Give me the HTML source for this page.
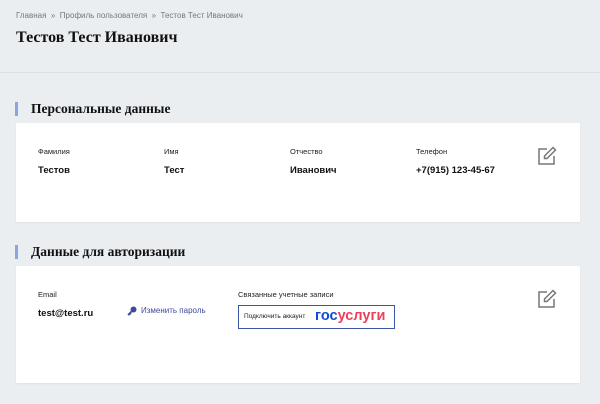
<!DOCTYPE html>
<html><head><meta charset="utf-8"><style>
*{margin:0;padding:0;box-sizing:border-box}
body{width:600px;height:404px;background:#ebeef1;font-family:"Liberation Sans","DejaVu Sans",sans-serif;color:#111;position:relative;overflow:hidden}
.a{position:absolute;white-space:nowrap}
.hdr{position:absolute;left:0;top:0;width:600px;height:73px;border-bottom:1px solid #dcdfe3}
.bc{font-size:8px;color:#777;left:16px;top:11px}
.h1{font-family:"Liberation Serif","DejaVu Serif",serif;font-weight:bold;font-size:16px;left:16px;top:29px;color:#111}
.sec{font-family:"Liberation Serif","DejaVu Serif",serif;font-weight:bold;font-size:13.5px;left:31px;color:#111}
.bar{position:absolute;left:15px;width:3px;height:14px;background:#8ea3e3}
.card{position:absolute;left:16px;width:564px;background:#fff;box-shadow:0 1px 2px rgba(0,0,0,.06)}
.lb{font-size:7.5px;color:#222}
.v{font-size:9.5px;font-weight:bold;color:#111}
</style></head><body>
<div class="hdr"></div>
<div class="a bc">Главная &nbsp;»&nbsp; Профиль пользователя &nbsp;»&nbsp; Тестов Тест Иванович</div>
<div class="a h1">Тестов Тест Иванович</div>

<div class="bar" style="top:102px"></div>
<div class="a sec" style="top:101px">Персональные данные</div>
<div class="card" style="top:123px;height:99px"></div>
<div class="a lb" style="left:38px;top:147px">Фамилия</div>
<div class="a lb" style="left:164px;top:147px">Имя</div>
<div class="a lb" style="left:290px;top:147px">Отчество</div>
<div class="a lb" style="left:416px;top:147px">Телефон</div>
<div class="a v" style="left:38px;top:165px">Тестов</div>
<div class="a v" style="left:164px;top:165px">Тест</div>
<div class="a v" style="left:290px;top:165px">Иванович</div>
<div class="a v" style="left:416px;top:165px">+7(915) 123-45-67</div>
<svg class="a" style="left:537px;top:146px" width="20" height="20" viewBox="0 0 20 20" fill="none" stroke="#777" stroke-width="1.5"><path d="M10 3H2v15h15v-8"/><path d="M16 1.5l2.5 2.5L10 12.5H7.5V10z"/></svg>

<div class="bar" style="top:245px"></div>
<div class="a sec" style="top:244px">Данные для авторизации</div>
<div class="card" style="top:266px;height:117px"></div>
<div class="a lb" style="left:38px;top:290px">Email</div>
<div class="a v" style="left:38px;top:308px">test@test.ru</div>
<svg class="a" style="left:127px;top:306px" width="10" height="10" viewBox="0 0 10 10"><circle cx="6.5" cy="3.5" r="3" fill="#3c4b9c"/><path d="M5 5L1 9M2 8l1 1M3 7l1 1" stroke="#3c4b9c" stroke-width="1.6"/></svg>
<div class="a" style="left:141px;top:306px;font-size:8px;color:#3c4b9c">Изменить пароль</div>
<div class="a lb" style="left:238px;top:290px">Связанные учетные записи</div>
<div class="a" style="left:238px;top:305px;width:157px;height:24px;border:1px solid #3c55a8"></div>
<div class="a" style="left:244px;top:313px;font-size:6.5px;color:#222">Подключить аккаунт</div>
<div class="a" style="left:315px;top:308px;font-size:14.5px;font-weight:bold;letter-spacing:0px"><span style="color:#0d4cd3">гос</span><span style="color:#ee3f58">услуги</span></div>
<svg class="a" style="left:537px;top:289px" width="20" height="20" viewBox="0 0 20 20" fill="none" stroke="#777" stroke-width="1.5"><path d="M10 3H2v15h15v-8"/><path d="M16 1.5l2.5 2.5L10 12.5H7.5V10z"/></svg>
</body></html>
